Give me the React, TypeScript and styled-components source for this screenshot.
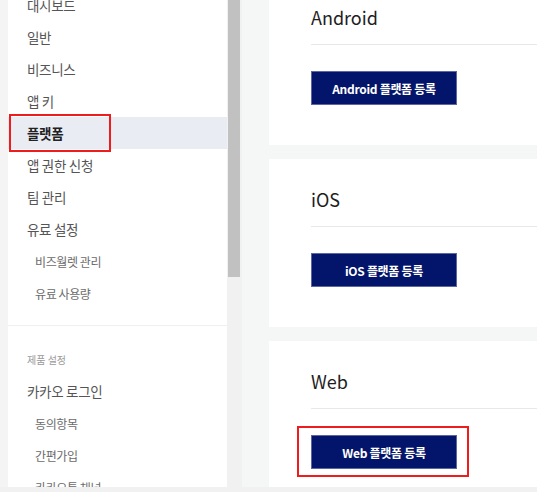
import React from "react";
import styled, { createGlobalStyle } from "styled-components";

const Global = createGlobalStyle`
  html, body { margin: 0; padding: 0; overflow: hidden; }
  body {
    width: 537px;
    height: 492px;
    background: #f4f4f4;
    font-family: "Noto Sans CJK KR", "Noto Sans", sans-serif;
  }
`;

const Screen = styled.div`
  display: flex;
  flex-direction: column;
  width: 537px;
  height: 492px;
  overflow: hidden;
`;

const Viewport = styled.div`
  flex: 0 0 487px;
  display: flex;
  overflow: hidden;
  padding-left: 8px;
  background: #f4f4f4;
`;

const BottomBar = styled.div`
  flex: 0 0 5px;
  background: #f1f1f1;
`;

const Sidebar = styled.nav`
  flex: 0 0 219px;
  display: flex;
  flex-direction: column;
  gap: 1px;
  background: #efefef;
  overflow: hidden;
`;

const Panel = styled.div<{ $top: number; $bottom: number; $shift?: number }>`
  background: #fff;
  margin-top: ${(p) => p.$shift ?? 0}px;
  padding: ${(p) => p.$top}px 0 ${(p) => p.$bottom}px;
  display: flex;
  flex-direction: column;
`;

const SectionLabel = styled.div`
  padding-left: 19px;
  margin-bottom: 5px;
  font-size: 10px;
  line-height: 20px;
  color: #9a9a9a;
`;

const MenuItem = styled.div<{ $sub?: boolean; $active?: boolean }>`
  position: relative;
  height: 32px;
  display: flex;
  align-items: center;
  padding-left: ${(p) => (p.$sub ? 27 : 19)}px;
  font-size: ${(p) => (p.$sub ? 12 : 13.5)}px;
  letter-spacing: ${(p) => (p.$sub ? -0.4 : -0.3)}px;
  color: ${(p) => (p.$active ? "#222" : p.$sub ? "#6b6b6b" : "#555")};
  font-weight: ${(p) => (p.$active ? 700 : 400)};
  background: ${(p) => (p.$active ? "#e9ecf3" : "transparent")};
  white-space: nowrap;
`;

const Highlight = styled.span<{ $l: number; $t: number; $w: number; $h: number }>`
  position: absolute;
  left: ${(p) => p.$l}px;
  top: ${(p) => p.$t}px;
  width: ${(p) => p.$w}px;
  height: ${(p) => p.$h}px;
  box-sizing: border-box;
  border: 2px solid #ee1c1c;
  pointer-events: none;
`;

const ScrollTrack = styled.div`
  flex: 0 0 15px;
  background: #f1f1f1;
  display: flex;
  justify-content: flex-start;
  padding-left: 1px;
  box-sizing: border-box;
`;

const ScrollThumb = styled.div`
  width: 12px;
  height: 277px;
  background: #c1c1c1;
`;

const Gutter = styled.div`
  flex: 0 0 27px;
  background: #f5f7f6;
`;

const Content = styled.main`
  flex: 1;
  display: flex;
  flex-direction: column;
  gap: 14px;
  margin-top: -23px;
  background: #f5f7f6;
`;

const Card = styled.section`
  background: #fff;
  height: 168px;
  box-sizing: border-box;
  padding: 27px 0 0 42px;
  display: flex;
  flex-direction: column;
  flex-shrink: 0;
`;

const CardTitle = styled.h2`
  margin: 0;
  font-size: 18px;
  line-height: 26px;
  font-weight: 400;
  color: #1e1e1e;
`;

const Divider = styled.hr`
  margin: 14px 0 0;
  border: 0;
  height: 1px;
  background: #e8e8e8;
`;

const ButtonWrap = styled.div`
  position: relative;
  margin-top: 26px;
  width: 146px;
`;

const RegisterButton = styled.button`
  width: 146px;
  height: 34px;
  box-sizing: border-box;
  background: #03156a;
  border: 1px solid #5c66a0;
  color: #fff;
  font-family: "Noto Sans CJK KR", "Noto Sans", sans-serif;
  font-size: 12px;
  font-weight: 700;
  letter-spacing: -0.3px;
  padding: 0;
  cursor: pointer;
`;

const mainMenu = [
  "대시보드",
  "일반",
  "비즈니스",
  "앱 키",
  "플랫폼",
  "앱 권한 신청",
  "팀 관리",
  "유료 설정",
];

const platforms = [
  { name: "Android", marked: false },
  { name: "iOS", marked: false },
  { name: "Web", marked: true },
];

export default function App() {
  return (
    <>
      <Global />
      <Screen>
        <Viewport>
          <Sidebar>
            <Panel $top={0} $bottom={16} $shift={-11}>
              {mainMenu.map((m) => (
                <MenuItem key={m} $active={m === "플랫폼"}>
                  {m}
                  {m === "플랫폼" && <Highlight $l={1} $t={-3} $w={102} $h={38} />}
                </MenuItem>
              ))}
              <MenuItem $sub>비즈월렛 관리</MenuItem>
              <MenuItem $sub>유료 사용량</MenuItem>
            </Panel>
            <Panel $top={24} $bottom={0}>
              <SectionLabel>제품 설정</SectionLabel>
              <MenuItem>카카오 로그인</MenuItem>
              <MenuItem $sub>동의항목</MenuItem>
              <MenuItem $sub>간편가입</MenuItem>
              <MenuItem $sub>카카오톡 채널</MenuItem>
            </Panel>
          </Sidebar>
          <ScrollTrack>
            <ScrollThumb />
          </ScrollTrack>
          <Gutter />
          <Content>
            {platforms.map((p) => (
              <Card key={p.name}>
                <CardTitle>{p.name}</CardTitle>
                <Divider />
                <ButtonWrap>
                  <RegisterButton>{p.name} 플랫폼 등록</RegisterButton>
                  {p.marked && <Highlight $l={-14} $t={-9} $w={172} $h={51} />}
                </ButtonWrap>
              </Card>
            ))}
          </Content>
        </Viewport>
        <BottomBar />
      </Screen>
    </>
  );
}
